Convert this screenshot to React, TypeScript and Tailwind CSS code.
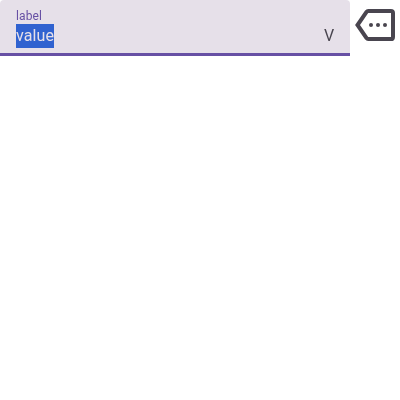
export default function App() {
  return (
    <div className="flex h-[400px] w-[400px] items-start bg-white font-['Roboto',sans-serif] antialiased">
      <div className="flex h-14 w-[350px] items-end justify-between rounded-t-[4px] border-b-[3px] border-[#6750a4] bg-[#e6e0e9] px-4 pb-[5px]">
        <div className="flex flex-col items-start">
          <label className="text-xs leading-4 tracking-[0.1px] text-[#6750a4] will-change-transform">label</label>
          <span className="w-[38px] bg-[#3062d0] text-base leading-6 tracking-[0.1px] text-[#e6e0e9] will-change-transform">value</span>
        </div>
        <span className="text-base leading-6 text-[#49454f] will-change-transform">V</span>
      </div>
      <svg className="ml-[5px] mt-[5px] h-10 w-10" viewBox="0 0 40 40" fill="none">
        <path d="M13.2 5.9H35.8Q38 5.9 38 8.100V31.900Q38 34.100 35.800 34.100H13.200Q12.200 34.100 11.700 33.300L2.500 20L11.700 6.700Q12.200 5.900 13.200 5.900Z" stroke="#49454f" strokeWidth="4" />
        <g fill="#49454f">
          <circle cx="16" cy="20" r="2" />
          <circle cx="23" cy="20" r="2" />
          <circle cx="30" cy="20" r="2" />
        </g>
      </svg>
    </div>
  );
}
